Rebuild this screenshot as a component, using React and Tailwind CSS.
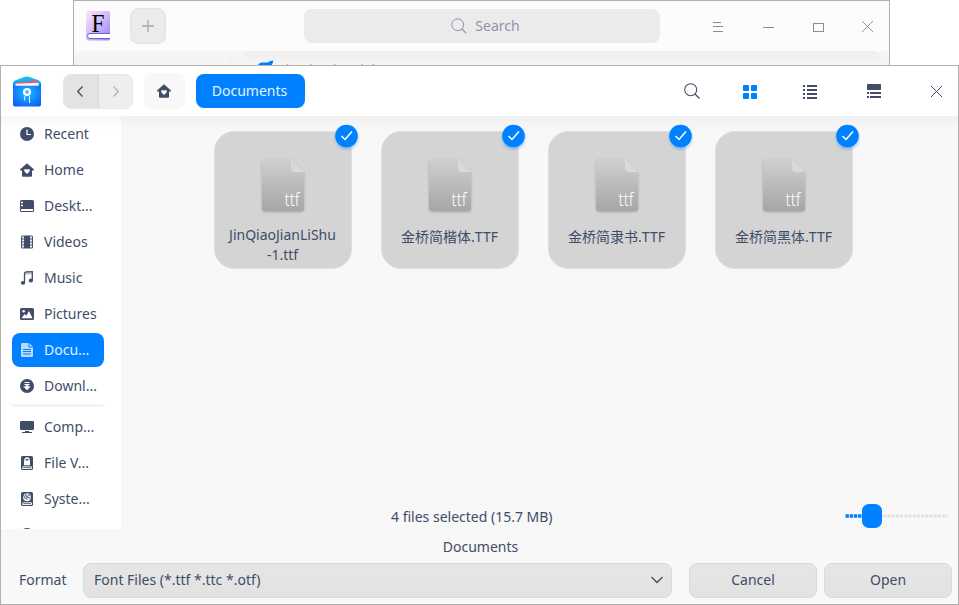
const font = { fontFamily: '"Noto Sans", "Noto Sans CJK SC", sans-serif' };
const INK = '#414d68';

function AppIcon() {
  return (
    <svg width="24" height="30" viewBox="0 0 24 30">
      <defs>
        <linearGradient id="fg" x1="0" y1="0" x2="1" y2="1">
          <stop offset="0" stopColor="#ffe3fb" />
          <stop offset="0.5" stopColor="#cdb9fb" />
          <stop offset="1" stopColor="#9184ff" />
        </linearGradient>
      </defs>
      <path d="M2 0H22Q24 0 24 2V27Q24 29.5 22 29.5H3Q0 29.500 0 26V2Q0 0 2 0Z" fill="url(#fg)" />
      <path d="M24 22.500H4Q1.500 22.500 1.500 24.800Q1.500 27.500 4 27.500H24" fill="#fff" stroke="#7460c4" strokeWidth="1" />
      <text x="12" y="21" textAnchor="middle" fontFamily="Liberation Serif" fontSize="24.500" textLength="13" lengthAdjust="spacingAndGlyphs">F</text>
    </svg>
  );
}

function ManagerIcon() {
  return (
    <svg width="28" height="31" viewBox="0 0 28 31">
      <defs>
        <radialGradient id="mg" cx="0.5" cy="0.4" r="0.7">
          <stop offset="0" stopColor="#1cc0ff" />
          <stop offset="1" stopColor="#0a5cfa" />
        </radialGradient>
        <linearGradient id="lid" x1="0" y1="0" x2="0" y2="1">
          <stop offset="0" stopColor="#1cc3ee" />
          <stop offset="1" stopColor="#1283e8" />
        </linearGradient>
      </defs>
      <path d="M0 7Q0 5.500 2 4.500L12 .8Q14 0 16 .8L26 4.500Q28 5.500 28 7V14H0Z" fill="url(#lid)" />
      <path d="M3 7L23 4.800Q25 4.800 25 7V8H3Z" fill="#ff4d6e" />
      <path d="M2.500 7.800L25.500 6.800V10H2.500Z" fill="#f4f5fb" />
      <path d="M0 8L2 9.800H26L28 8V28.500Q28 30.500 26 30.500H2Q0 30.500 0 28.500Z" fill="url(#mg)" />
      <circle cx="14" cy="16" r="2.900" fill="none" stroke="#fff" strokeWidth="2.400" />
      <path d="M11.700 20V24.500M16.500 20V27" stroke="#e3f4ff" strokeWidth="1" />
    </svg>
  );
}

function Glyph({ name, color = INK }) {
  const shapes = {
    recent: (<><circle cx="7" cy="7" r="7" fill={color} /><path d="M7 2.500V7.500H11" fill="none" stroke="#fff" strokeWidth="1.200" /></>),
    home: (<><path d="M7 .2L14 6.500V7.500H12V13Q12 13.800 11 13.800H3Q2 13.800 2 13V7.500H0V6.500Z" fill={color} /><path d="M7 11L4.300 8.200Q3.800 6.200 5.500 6.100Q6.500 6.100 7 7Q7.500 6.100 8.500 6.100Q10.200 6.200 9.700 8.200Z" fill="#fff" /></>),
    desktop: (<><rect x="0" y="1" width="14" height="12" rx="1.500" fill={color} /><path d="M1 10H13V11.500Q13 12 12.500 12H1.500Q1 12 1 11.500Z" fill="#fff" /><path d="M1 3.500H3M1 6.500H3" stroke="#fff" strokeWidth="1.300" /></>),
    videos: (<><rect x="1" y="0.500" width="12" height="13" rx="1.500" fill={color} /><path d="M3 1.500V13M11 1.500V13" stroke="#fff" strokeWidth="1.800" strokeDasharray="1.900 1.100" /></>),
    music: (<><path d="M4.500 11.500V2.500Q4.500 1.200 6 1L12.300 .7V9.500" fill="none" stroke={color} strokeWidth="1.300" /><path d="M4.500 2.300L12.500 1.200V3L4.500 4Z" fill={color} opacity=".35" /><ellipse cx="3" cy="11.800" rx="2.200" ry="1.900" fill={color} /><ellipse cx="10.900" cy="9.500" rx="2.100" ry="1.900" fill={color} /></>),
    pictures: (<><rect y="1" width="14" height="12" rx="1.600" fill={color} /><circle cx="3.600" cy="4.200" r="1.300" fill="#fff" /><path d="M1.500 11.200L4.500 7L6.300 8.800L9 4L12.500 11.200Z" fill="#fff" /></>),
    documents: (<><path d="M1 1.200Q1 0 2.200 0H8.500V4.500H13V12.800Q13 14 11.800 14H2.200Q1 14 1 12.800Z" fill="#b8dcff" /><path d="M9.500 .2L12.800 3.500H9.500Z" fill="#b8dcff" /><path d="M3 6.500H11M3 8.500H11M3 11H11" stroke="#0081ff" /></>),
    downloads: (<><circle cx="7" cy="7" r="7" fill={color} /><path d="M4.500 3.500H9.500M4.500 5.500H9.500" stroke="#fff" strokeWidth="1" /><path d="M5.500 6.200H8.500V7.500H10.800L7 11.300L3.200 7.500H5.500Z" fill="#fff" /></>),
    computer: (<><rect y="1" width="14" height="9" rx="1.200" fill={color} /><path d="M5 11.500H9M2 12.500H12" stroke={color} strokeWidth="1" /></>),
    vault: (<><rect x="1" width="12" height="14" rx="1.500" fill={color} /><rect x="4" y="4.500" width="6" height="4.800" rx=".6" fill="#fff" /><path d="M5 5.500V3.700Q5 2 7 2T9 3.700V5.500" fill="none" stroke="#fff" strokeWidth="1.300" /><path d="M2.500 12.500L3 10.800H11.500V12.500Z" fill="none" stroke="#fff" strokeWidth=".9" /></>),
    system: (<><rect x="1" width="12" height="14" rx="1.500" fill={color} /><circle cx="7" cy="5.300" r="4" fill="#e8eaee" /><path d="M3.500 2.800Q4 6.500 7 7.300M5.800 1.500Q5 5 8 6M10.500 3Q7.500 2.500 7.500 4.800Q8.300 6.500 10.500 6" fill="none" stroke={color} strokeWidth=".9" /><path d="M2.500 12.500L3 10.800H11.500V12.500Z" fill="none" stroke="#fff" strokeWidth=".9" /></>),
    disc: <circle cx="7" cy="7" r="7" fill={color} />,
  };
  return <svg className="shrink-0" width="14" height="14" viewBox="0 0 14 14">{shapes[name]}</svg>;
}

const places = [
  ['recent', 'Recent'], ['home', 'Home'], ['desktop', 'Deskt...'], ['videos', 'Videos'],
  ['music', 'Music'], ['pictures', 'Pictures'], ['documents', 'Docu...'], ['downloads', 'Downl...'],
];
const devices = [['computer', 'Comp...'], ['vault', 'File V...'], ['system', 'Syste...'], ['disc', '']];

function Place({ icon, label }) {
  const on = icon === 'documents';
  return (
    <div className={`flex h-[34px] w-[92px] shrink-0 items-center gap-2.5 rounded-lg pl-2 ${on ? 'bg-[#0081ff] text-[#e0f0ff]' : ''}`}>
      <Glyph name={icon} />
      <span className="whitespace-nowrap">{label}</span>
    </div>
  );
}

function FileCard({ children, tall }) {
  return (
    <div className="relative flex h-[138px] w-[138px] flex-col items-center rounded-[20px] border border-[#dedede] bg-[#d4d4d4] pt-[23px]">
      <svg width="50" height="60" viewBox="0 0 50 60">
        <defs>
          <linearGradient id="doc" x1="0" y1="0" x2="0" y2="1">
            <stop offset="0" stopColor="#d0d0d0" /><stop offset="1" stopColor="#a6a6a6" />
          </linearGradient>
        </defs>
        <path className="drop-shadow-[0_1px_1px_rgba(0,0,0,0.22)]" d="M7.500 3.500H33L46 17V52.500Q46 56 42.500 56H7.500Q4 56 4 52.500V7Q4 3.500 7.500 3.500Z" fill="url(#doc)" />
        <path d="M33 3.500L46 17H37Q33 17 33 13Z" fill="#d9d9d9" />
        <text x="26.500" y="51" textLength="15" lengthAdjust="spacingAndGlyphs" fontFamily="Noto Sans" fontWeight="300" fontSize="17.500" fill="#fff">ttf</text>
      </svg>
      <div className={`pr-px text-center leading-5 ${tall ? 'mt-[10px]' : 'mt-[12px]'}`}>{children}</div>
      <svg className="absolute -top-[9px] -right-[8.5px]" width="28" height="28" viewBox="0 0 28 28">
        <circle className="drop-shadow-[0_2px_1.500px_rgba(0,129,255,0.4)]" cx="14.500" cy="13" r="11.300" fill="#0081ff" />
        <path d="M9.500 13L13 16.500L20 8.500" fill="none" stroke="#fff" strokeWidth="1.500" />
      </svg>
    </div>
  );
}

function BackWindow() {
  return (
    <div className="ml-[73px] flex h-[65px] w-[817px] flex-col overflow-hidden border border-b-0 border-[#b0b0b0] bg-[#f6f6f6]">
      <div className="flex h-[50px] shrink-0 items-center bg-[#fcfcfc] pl-3">
        <AppIcon />
        <div className="ml-5 flex size-9 items-center justify-center rounded-lg border border-[#e4e4e4] bg-[#ebebeb]">
          <svg width="12" height="12" viewBox="0 0 12 12"><path d="M6 0V12M0 6H12" stroke="#a4a9b5" strokeWidth="1.300" /></svg>
        </div>
        <div className="ml-[138px] flex h-[34px] w-[356px] items-center justify-center gap-2 rounded-lg bg-[#ebebeb] pl-[7px] text-[#8d95a5]">
          <svg width="16" height="16" viewBox="0 0 16 16"><circle cx="6.700" cy="6.700" r="5.900" fill="none" stroke="#8d95a5" /><path d="M11 11L15.300 15.300" stroke="#8d95a5" strokeWidth="1.200" /></svg>
          <span>Search</span>
        </div>
        <svg className="mt-px ml-[53px]" width="11" height="10" viewBox="0 0 11 10"><path d="M0 .5H8M0 4.500H10M0 9.500H10" stroke="#858d9e" /></svg>
        <svg className="mt-px ml-[39px]" width="11" height="10" viewBox="0 0 11 10"><path d="M0 5.500H11" stroke="#858d9e" /></svg>
        <svg className="mt-px ml-[39px]" width="11" height="10" viewBox="0 0 11 10"><rect x=".5" y="1.500" width="10" height="8" fill="none" stroke="#858d9e" /></svg>
        <svg className="ml-[38px]" width="11" height="11" viewBox="0 0 11 11"><path d="M0 0L11 11M11 0L0 11" stroke="#858d9e" strokeWidth=".9" /></svg>
      </div>
      <div className="flex h-[14px] overflow-hidden bg-linear-to-b from-[#f6f6f6] to-[#f3f3f3]">
        <div className="h-full w-[157px] shrink-0 border-r border-[#eeeeee]" />
        <div className="ml-[11px] flex h-10 w-[639px] rounded-lg bg-linear-to-b from-[#efefef] to-[#f5f5f5] to-[14px] pt-[7px] pl-4">
          <svg className="mt-[2px]" width="16" height="16" viewBox="0 0 16 16"><path d="M0 5Q1 2.500 4 2.500H10L12 1L15.500 .5L14 5Z" fill="#0081ff" /></svg>
          <span className="mt-[2px] ml-2 text-[14px] leading-[19px] text-[#9a9fab]">JinQiaoJianLiShu</span>
        </div>
      </div>
    </div>
  );
}

function Header() {
  return (
    <div className="flex h-[50px] shrink-0 items-center bg-white pl-3">
      <ManagerIcon />
      <div className="ml-[22px] flex h-[35px] w-[70px] overflow-hidden rounded-lg border border-[#e5e5e5] bg-[#eeeeee]">
        <div className="flex w-[35px] items-center justify-center border-r border-[#d9d9d9] bg-[#e3e3e3] pr-[3px]">
          <svg width="6" height="11" viewBox="0 0 6 11"><path d="M5.500 .5L.7 5.500L5.500 10.500" fill="none" stroke={INK} strokeWidth="1.300" /></svg>
        </div>
        <div className="flex flex-1 items-center justify-center pl-px">
          <svg width="6" height="11" viewBox="0 0 6 11"><path d="M.5 .5L5.300 5.500L.5 10.500" fill="none" stroke="#b0b3bb" strokeWidth="1.200" /></svg>
        </div>
      </div>
      <div className="ml-[11px] flex h-9 w-[41px] items-center justify-center rounded-lg bg-[#f8f8f8] pr-px"><Glyph name="home" /></div>
      <div className="ml-[11px] flex h-[34px] w-[109px] items-center justify-center rounded-lg bg-[#0081ff] pr-0.5 text-[#e6f2ff]">Documents</div>
      <svg className="ml-[379px]" width="16" height="16" viewBox="0 0 16 16"><circle cx="6.700" cy="6.700" r="6" fill="none" stroke={INK} strokeWidth="1.100" /><path d="M11 11L15.500 15.500" stroke={INK} strokeWidth="1.300" /></svg>
      <svg className="mt-[2px] ml-[43px]" width="14" height="14" viewBox="0 0 14 14" fill="#0081ff"><rect width="6" height="6" rx=".8" /><rect x="8" width="6" height="6" rx=".8" /><rect y="8" width="6" height="6" rx=".8" /><rect x="8" y="8" width="6" height="6" rx=".8" /></svg>
      <svg className="mt-[2px] ml-[46px]" width="14" height="14" viewBox="0 0 14 14"><path d="M0 1H2M4 1H14M0 5H2M4 5H14M0 9H2M4 9H14M0 13H2M4 13H14" stroke={INK} strokeWidth="2" /></svg>
      <svg className="ml-[50px]" width="14" height="14" viewBox="0 0 14 14"><rect width="14" height="6" rx=".8" fill={INK} /><path d="M0 9H2M3 9H14M0 13H2M3 13H14" stroke={INK} strokeWidth="2" /></svg>
      <svg className="mt-px ml-[50px]" width="11" height="11" viewBox="0 0 11 11"><path d="M0 0L11 11M11 0L0 11" stroke={INK} /></svg>
    </div>
  );
}

const button = 'flex h-[35px] items-center rounded-lg border border-[#d9d9d9] bg-linear-to-b from-[#e6e6e6] to-[#e2e2e2] pb-0.5';

export default function App() {
  return (
    <div className="h-[605px] w-[959px] overflow-hidden bg-white text-sm text-[#414d68]" style={font}>
      <BackWindow />
      <div className="flex h-[540px] w-[959px] flex-col border border-[#b0b0b0] bg-[#f8f8f8]">
        <Header />
        <div className="flex h-[413px] shrink-0">
          <div className="flex w-[120px] shrink-0 flex-col overflow-hidden bg-white bg-linear-to-b from-[#f7f7f7] to-white to-[14px] pt-px pl-[11px]">
            <div className="flex shrink-0 flex-col gap-0.5">
              {places.map(([i, l]) => <Place key={i} icon={i} label={l} />)}
            </div>
            <div className="mt-px mb-[3px] -ml-px h-[3px] w-[93px] shrink-0 rounded bg-[#f4f4f4]" />
            <div className="flex shrink-0 flex-col gap-0.5">
              {devices.map(([i, l]) => <Place key={i} icon={i} label={l} />)}
            </div>
          </div>
          <div className="flex flex-1 flex-col bg-linear-to-b from-[#f0f0f0] to-[#f8f8f8] to-[16px]">
            <div className="flex gap-[29px] pt-[15px] pl-[93px]">
              <FileCard tall>JinQiaoJianLiShu<br />-1.ttf</FileCard>
              <FileCard>金桥简楷体.TTF</FileCard>
              <FileCard>金桥简隶书.TTF</FileCard>
              <FileCard>金桥简黑体.TTF</FileCard>
            </div>
            <div className="mt-auto flex h-[26px] items-center pl-[270px]">
              <span className="w-[162px] pt-0.5 whitespace-nowrap">4 files selected (15.7 MB)</span>
              <svg className="ml-[292px]" width="103" height="24" viewBox="0 0 103 24">
                <path d="M.5 12H20" stroke="#0081ff" strokeWidth="3.500" strokeDasharray="3.400 .8" />
                <path d="M34 12H102.500" stroke="#e1e1e1" strokeWidth="3" strokeDasharray="3.200 1" />
                <rect x="17" width="20" height="24" rx="7" fill="#0081ff" />
              </svg>
            </div>
          </div>
        </div>
        <div className="flex h-[34px] shrink-0 items-center justify-center pt-0.5 pl-[2px]">Documents</div>
        <div className="flex h-[35px] items-center pl-[18px]">
          <span className="w-16 pb-0.5">Format</span>
          <div className={`${button} w-[589px] justify-between pr-[8px] pl-2.5`}>
            <span>Font Files (*.ttf *.ttc *.otf)</span>
            <svg width="12" height="8" viewBox="0 0 12 8"><path d="M.5 1L6 6.500L11.500 1" fill="none" stroke={INK} strokeWidth="1.300" /></svg>
          </div>
          <div className={`${button} ml-[17px] w-32 justify-center`}>Cancel</div>
          <div className={`${button} ml-[7px] w-32 justify-center`}>Open</div>
        </div>
      </div>
    </div>
  );
}
